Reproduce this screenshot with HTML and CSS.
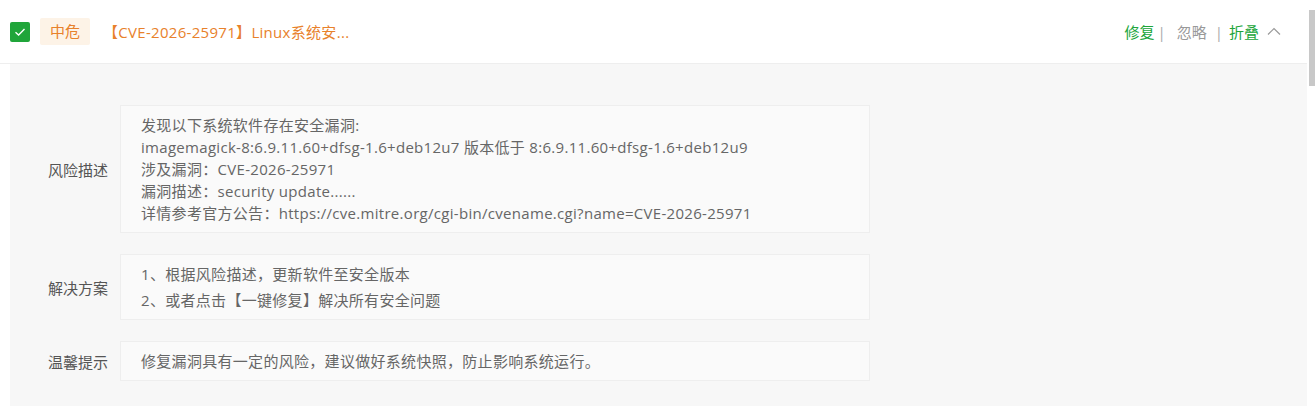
FILE: index.html
```html
<!DOCTYPE html>
<html lang="zh-CN">
<head>
  <meta charset="UTF-8" />
  <meta name="viewport" content="width=device-width, initial-scale=1.0"/>
  <title>漏洞扫描</title>
  <link rel="stylesheet" href="styles.css">
</head>
<body>

  <div class="page">
    <div class="list">
      <!-- one vulnerability, expanded -->
      <div class="vuln">
        <div class="vuln-head">
          <span class="check">
            <svg width="12" height="10" viewBox="0 0 12 10"><path d="M1.5 5.2 L4.6 8 L10.5 2" fill="none" stroke="#fff" stroke-width="1.4"/></svg>
          </span>
          <span class="level">中危</span>
          <span class="title">【CVE-2026-25971】Linux系统安...</span>
          <div class="actions">
            <a class="act">修复</a><span class="sep first">|</span>
            <a class="act gray">忽略</a><span class="sep">|</span>
            <a class="act">折叠</a>
            <svg class="chev" width="14" height="9" viewBox="0 0 14 9"><path d="M1 7.5 L7 1.5 L13 7.5" fill="none" stroke="#999" stroke-width="1.2"/></svg>
          </div>
        </div>

        <div class="vuln-body">
          <div class="row">
            <div class="label">风险描述</div>
            <div class="box">
              <p>发现以下系统软件存在安全漏洞:</p>
              <p>imagemagick-8:6.9.11.60+dfsg-1.6+deb12u7 版本低于 8:6.9.11.60+dfsg-1.6+deb12u9</p>
              <p>涉及漏洞：CVE-2026-25971</p>
              <p>漏洞描述：security update......</p>
              <p>详情参考官方公告：https://cve.mitre.org/cgi-bin/cvename.cgi?name=CVE-2026-25971</p>
            </div>
          </div>
          <div class="row">
            <div class="label">解决方案</div>
            <div class="box steps">
              <p>1、根据风险描述，更新软件至安全版本</p>
              <p>2、或者点击【一键修复】解决所有安全问题</p>
            </div>
          </div>
          <div class="row">
            <div class="label">温馨提示</div>
            <div class="box">
              <p>修复漏洞具有一定的风险，建议做好系统快照，防止影响系统运行。</p>
            </div>
          </div>
        </div>
      </div>
    </div>

    <!-- list scroll track -->
    <div class="scroll"><div class="thumb"></div></div>
  </div>

</body>
</html>
```

FILE: styles.css
```css
body {
  margin: 0; background: #fff; color: #666;
  font-family: "Open Sans", "Noto Sans CJK SC", sans-serif; font-size: 15px;
}
.page { display: flex; height: 100vh; overflow: hidden; }
.list { flex: 1; margin-right: 2px; }
.scroll { width: 6px; padding-top: 10px; }
.thumb { height: 76px; background: #c8c8c8; }

.vuln-head {
  display: flex; align-items: center;
  height: 63px; padding: 0 26px 0 10px;
  border-bottom: 1px solid #eeeeee;
}
.check {
  width: 20px; height: 20px; border-radius: 2px; background: #20a53a;
  display: flex; align-items: center; justify-content: center;
}
.level {
  margin-left: 10px; padding: 0 10px; height: 27px; line-height: 27px;
  background: #fdf3e7; color: #e8812b; border-radius: 2px;
}
.title { margin-left: 13px; color: #e8812b; letter-spacing: 0.3px; }
.actions { margin-left: auto; display: flex; align-items: center; }
.act { color: #20a53a; cursor: pointer; }
.act.gray { color: #999; }
.sep { color: #aaa; margin: 0 6px 0 8px; }
.sep.first { margin: 0 11px 0 3px; }
.chev { margin-left: 8px; }

.vuln-body {
  margin-left: 10px; background: #f7f7f7;
  padding: 41px 0 26px;
}
.row { display: flex; align-items: center; margin-bottom: 21px; }
.label { width: 98px; text-align: right; margin-right: 12px; color: #555; }
.box {
  width: 708px; padding: 8px 20px;
  background: #fafafa; border: 1px solid #eeeeee;
  letter-spacing: 0.3px;
}
.box p { margin: 0; line-height: 22px; }
.box.steps { padding: 6px 20px; }
.box.steps p { line-height: 26px; }
```
